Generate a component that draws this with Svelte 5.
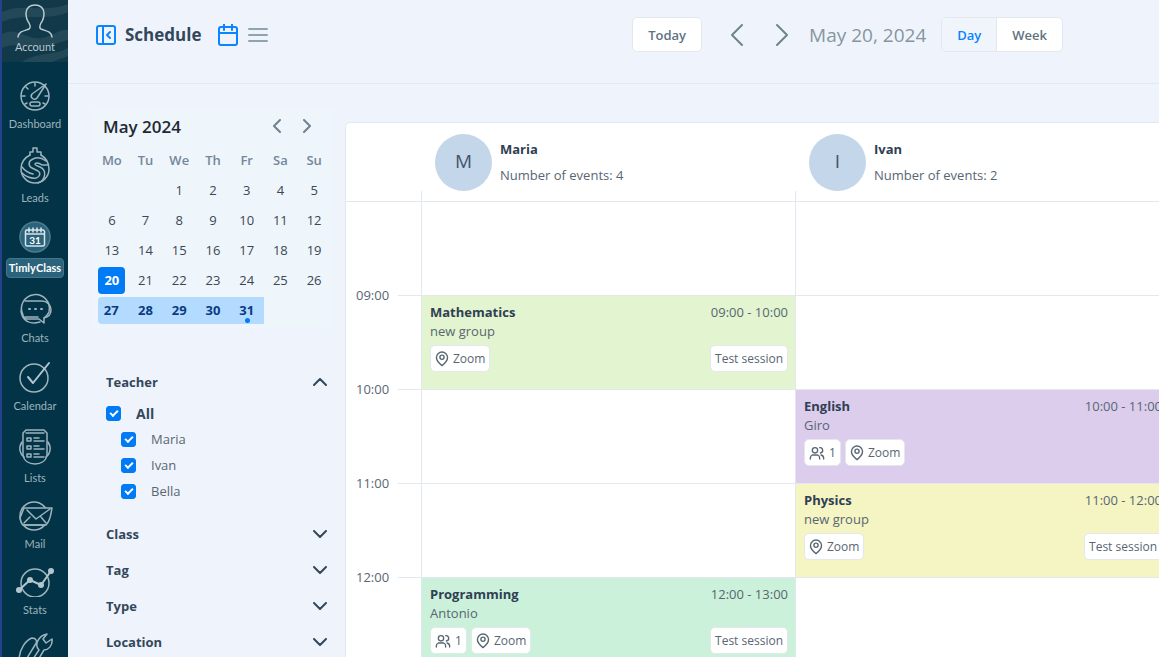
<script lang="ts">
  type Item = { id: string; label: string; height: number };
  type Lesson = {
    title: string;
    group: string;
    time: string;
    color: string;
    members?: number;
    tag?: string;
  };
  type Teacher = { name: string; events: number; slots: (Lesson | null)[] };

  const items: Item[] = [
    { id: 'dashboard', label: 'Dashboard', height: 30 },
    { id: 'leads', label: 'Leads', height: 38 },
    { id: 'class', label: 'TimlyClass', height: 32 },
    { id: 'chats', label: 'Chats', height: 32 },
    { id: 'calendar', label: 'Calendar', height: 32 },
    { id: 'lists', label: 'Lists', height: 36 },
    { id: 'mail', label: 'Mail', height: 30 },
    { id: 'stats', label: 'Stats', height: 30 },
    { id: 'settings', label: 'Settings', height: 36 }
  ];

  const weekdays = ['Mo', 'Tu', 'We', 'Th', 'Fr', 'Sa', 'Su'];

  // May 2024 starts on Wednesday
  const weeks: number[][] = [0, 1, 2, 3, 4].map((w) =>
    weekdays.map((_, d) => {
      const day = w * 7 + d - 1;
      return day > 0 && day <= 31 ? day : 0;
    })
  );

  const hours = ['09:00', '10:00', '11:00', '12:00'];

  const teachers: Teacher[] = [
    {
      name: 'Maria',
      events: 4,
      slots: [
        null,
        { title: 'Mathematics', group: 'new group', time: '09:00 - 10:00', color: 'green', tag: 'Test session' },
        null,
        null,
        { title: 'Programming', group: 'Antonio', time: '12:00 - 13:00', color: 'mint', members: 1, tag: 'Test session' }
      ]
    },
    {
      name: 'Ivan',
      events: 2,
      slots: [
        null,
        null,
        { title: 'English', group: 'Giro', time: '10:00 - 11:00', color: 'purple', members: 1 },
        { title: 'Physics', group: 'new group', time: '11:00 - 12:00', color: 'yellow', tag: 'Test session' },
        null
      ]
    }
  ];

  const filters = ['Class', 'Tag', 'Type', 'Location'];

  let view = $state('Day');
  let selected = $state(20);
  let teacherOpen = $state(true);
  let checked: Record<string, boolean> = $state({ Maria: true, Ivan: true, Bella: true });
  let allChecked = $derived(Object.values(checked).every(Boolean));

  function toggleAll() {
    const next = !allChecked;
    for (const name in checked) checked[name] = next;
  }
</script>

<div class="app">
  <nav class="sidebar">
    <a class="account" href="#account">
      <svg class="waves" viewBox="0 0 66 62" preserveAspectRatio="none" aria-hidden="true">
        <path d="M0 12C20 2 40 14 66 4V12C44 22 22 12 0 22Z M0 34C16 26 22 40 40 38C52 36 58 28 66 30V40C50 44 40 50 20 46C10 44 4 46 0 48Z M20 62C34 52 52 56 66 48V56L50 62Z" />
      </svg>
      <svg width="36" height="34" viewBox="0 0 36 34" class="line">
        <path d="M1 33C2 27 7 27 12 25C14 24 13 21 12 19C9 15 9 12 9 9C9 4 13 1 18 1S27 4 27 9C27 12 27 15 24 19C23 21 22 24 24 25C29 27 34 27 35 33" />
      </svg>
      <span>Account</span>
    </a>
    {#each items as item}
      <a class="item" class:active={item.id === 'class'} href="#{item.id}">
        <svg class="line" width="40" height={item.height} viewBox="0 0 40 {item.height}">
          {#if item.id === 'dashboard'}
            <circle cx="20" cy="15" r="14" />
            <path d="M31 3L22 17A3 3 0 0 1 17 13Z M17 21h6a1.500 1.500 0 0 1 0 4h-6a1.500 1.500 0 0 1 0-4Z" />
            <path d="M20 2v3M7 15h3M30 15h3M11 6l2 2M10 23l2-1M30 23l-2-1" />
          {:else if item.id === 'leads'}
            <path d="M15 8V5h3V1h4v4h4v3" />
            <path d="M15 8C9 11 6 16 6 22A14 14 0 0 0 34 22C34 16 31 11 26 8" />
            <path d="M31 14C27 11 22 10 18 12C13 14 13 19 17 21L23 24C26 26 25 30 21 31C16 32 10 29 7 26" />
            <path d="M33 18H27C23 15 20 16 20 17C20 18 22 19 25 20C32 23 31 33 23 36M7 20C10 24 14 26 18 27" />
          {:else if item.id === 'class'}
            <circle class="disc" cx="20" cy="16" r="15" />
            <path d="M12 9h16a1.500 1.500 0 0 1 1.500 1.500v13A1.500 1.500 0 0 1 28 25H12a1.500 1.500 0 0 1-1.500-1.500v-13A1.500 1.500 0 0 1 12 9Z" />
            <path d="M11 13h18M14 7v4M18 7v4M22 7v4M26 7v4" />
            <text x="20" y="23">31</text>
          {:else if item.id === 'chats'}
            <path d="M8 22A14 14 0 1 1 34 19C33 22 30 24 29 25V30L24 26H11C9 25 8 24 8 22" />
            <path d="M10 8H27C32 8 36 12 36 17C36 21 33 24 29 25M6 18C7 26 12 30 20 30L25 29M10 24h13" />
            <path class="dots" d="M14 16h1M20 16h1M26 16h1" />
          {:else if item.id === 'calendar'}
            <circle cx="19" cy="17" r="14" />
            <path class="thick" d="M13 16L18 22L34 2" />
          {:else if item.id === 'lists'}
            <path d="M11 1h18l3 3v22C31 32 26 35 20 35S9 32 8 26V4Z M11 4h18" />
            <path d="M7 13C3 19 5 25 9 28M33 13C37 19 35 25 31 28" />
            <path d="M12 9h4v3h-4ZM12 17h4v3h-4ZM12 25h4v3h-4ZM19 9h5M19 12h10M19 17h5M19 20h10M19 25h5M19 28h10" />
          {:else if item.id === 'mail'}
            <circle cx="19" cy="15" r="14" />
            <path class="fill" d="M9 7H37C36 11 36 19 31 24H9C6 24 6 20 5 17Z" />
            <path d="M12 9L21 18L35 8M9 22L15 16M31 22L26 16M8 24h22" />
          {:else if item.id === 'stats'}
            <circle cx="20" cy="16" r="14" />
            <path class="thick" d="M4 23L15 13L26 18L36 4" />
            <circle class="dot" cx="4" cy="23" r="3" />
            <circle class="dot" cx="15" cy="13" r="3" />
            <circle class="dot" cx="26" cy="18" r="3" />
            <circle class="dot" cx="36" cy="4" r="3" />
          {:else}
            <path d="M4 26C5 15 11 7 17 5C21 5 23 8 20 12L9 30" />
            <path d="M14 32L24 17C19 12 23 3 32 1L28 6L31 10L37 6C38 13 33 17 29 17L20 32" />
          {/if}
        </svg>
        <span>{item.label}</span>
      </a>
    {/each}
  </nav>

  <main>
    <header class="topbar">
      <div class="group">
        <button class="icon blue" aria-label="Collapse panel">
          <svg width="20" height="20" viewBox="0 0 20 20">
            <rect x="1" y="1" width="18" height="18" rx="2" />
            <path d="M7 1v18M14 7l-3 3l3 3" />
          </svg>
        </button>
        <h1>Schedule</h1>
        <button class="icon blue calendar-view" aria-label="Calendar view">
          <svg width="20" height="22" viewBox="0 0 20 22">
            <rect x="1" y="3" width="18" height="18" rx="2" />
            <path d="M1 9h18M6 0v6M14 0v6" />
          </svg>
        </button>
        <button class="icon gray" aria-label="List view">
          <svg width="20" height="20" viewBox="0 0 20 20">
            <path d="M1 4h18M1 10h18M1 16h18" />
          </svg>
        </button>
      </div>
      <div class="group">
        <button class="today">Today</button>
        <button class="icon slate prev" aria-label="Previous day">
          <svg width="14" height="24" viewBox="0 0 14 24"><path d="M12 2L2 12l10 10" /></svg>
        </button>
        <button class="icon slate next" aria-label="Next day">
          <svg width="14" height="24" viewBox="0 0 14 24"><path d="M2 2l10 10L2 22" /></svg>
        </button>
        <span class="date">May 20, 2024</span>
        <div class="switch">
          {#each ['Day', 'Week'] as name}
            <button class:on={view === name} onclick={() => (view = name)}>{name}</button>
          {/each}
        </div>
      </div>
    </header>

    <div class="content">
      <aside>
        <section class="month">
          <div class="month-head">
            <h2>May 2024</h2>
            <button class="icon slate" aria-label="Previous month">
              <svg width="10" height="14" viewBox="0 0 10 14"><path d="M8 1L2 7l6 6" /></svg>
            </button>
            <button class="icon slate" aria-label="Next month">
              <svg width="10" height="14" viewBox="0 0 10 14"><path d="M2 1l6 6l-6 6" /></svg>
            </button>
          </div>
          <table>
            <thead>
              <tr>
                {#each weekdays as day}<th>{day}</th>{/each}
              </tr>
            </thead>
            <tbody>
              {#each weeks as week}
                <tr>
                  {#each week as day}
                    <td class:range={day >= 27} class:first={day === 27}>
                      {#if day}
                        <button
                          class:selected={day === selected}
                          class:marked={day === 31}
                          onclick={() => (selected = day)}>{day}</button>
                      {/if}
                    </td>
                  {/each}
                </tr>
              {/each}
            </tbody>
          </table>
        </section>

        <section class="filters">
          <button class="filter" onclick={() => (teacherOpen = !teacherOpen)}>
            Teacher
            <svg width="14" height="8" viewBox="0 0 14 8"><path d="M1 7l6-6l6 6" /></svg>
          </button>
          {#if teacherOpen}
            <div class="options">
              <label class="all">
                <input type="checkbox" checked={allChecked} onchange={toggleAll} />
                All
              </label>
              {#each Object.keys(checked) as name}
                <label class="option">
                  <input type="checkbox" bind:checked={checked[name]} />
                  {name}
                </label>
              {/each}
            </div>
          {/if}
          {#each filters as filter}
            <button class="filter">
              {filter}
              <svg width="14" height="8" viewBox="0 0 14 8"><path d="M1 1l6 6l6-6" /></svg>
            </button>
          {/each}
        </section>
      </aside>

      <div class="board">
        <div class="corner"></div>
        {#each teachers as teacher}
          <div class="teacher">
            <div class="avatar">{teacher.name[0]}</div>
            <div>
              <h3>{teacher.name}</h3>
              <p>Number of events: {teacher.events}</p>
            </div>
          </div>
        {/each}

        <div class="hours">
          {#each hours as hour}
            <div class="hour">{hour}</div>
          {/each}
        </div>
        {#each teachers as teacher}
          <div class="lane">
            {#each teacher.slots as lesson}
              <div class="slot">
                {#if lesson}
                  <article class="lesson {lesson.color}">
                    <div class="row">
                      <h4>{lesson.title}</h4>
                      <span>{lesson.time}</span>
                    </div>
                    <p>{lesson.group}</p>
                    <div class="chips">
                      {#if lesson.members}
                        <span class="chip">
                          <svg width="16" height="16" viewBox="0 0 24 24">
                            <circle cx="9" cy="8" r="4" />
                            <path d="M2 21v-1a5 5 0 0 1 3-5M16 21v-1a5 5 0 0 0-3-5M5 15h8M2 21v-2M16 4a4 4 0 0 1 1 8M18 15a5 5 0 0 1 4 5v1" />
                          </svg>
                          {lesson.members}
                        </span>
                      {/if}
                      <span class="chip">
                        <svg width="14" height="16" viewBox="0 0 20 23">
                          <path d="M18 9.500C18 15 10 21 10 21S2 15 2 9.500a8 8 0 0 1 16 0Z" />
                          <circle cx="10" cy="9" r="3" />
                        </svg>
                        Zoom
                      </span>
                      {#if lesson.tag}
                        <span class="chip tag">{lesson.tag}</span>
                      {/if}
                    </div>
                  </article>
                {/if}
              </div>
            {/each}
          </div>
        {/each}
      </div>
    </div>
  </main>
</div>

<style>
  :global(body) {
    background: #eff4fc;
  }

  .app {
    display: flex;
    height: 100vh;
    overflow: hidden;
    font-family: 'Open Sans', 'Noto Sans', sans-serif;
    font-size: 13px;
    color: #586673;
  }

  h1, h2, h3, h4, p {
    margin: 0;
  }

  button {
    font: inherit;
    color: inherit;
    border: none;
    background: none;
    padding: 0;
    cursor: pointer;
  }

  svg {
    display: block;
    flex: none;
    fill: none;
    stroke: currentColor;
    stroke-width: 2;
    stroke-linecap: round;
    stroke-linejoin: round;
  }

  /* Sidebar */
  .sidebar {
    flex: none;
    box-sizing: border-box;
    width: 68px;
    display: flex;
    flex-direction: column;
    gap: 15px;
    background: #033347;
    border-left: 2px solid #27408a;
    overflow: hidden;
  }

  .sidebar a {
    flex: none;
    display: flex;
    flex-direction: column;
    align-items: center;
    gap: 5px;
    color: #9db4bd;
    font-family: Lato, 'Open Sans', sans-serif;
    font-size: 11px;
    line-height: 16px;
    text-decoration: none;
  }

  .sidebar .account {
    position: relative;
    height: 58px;
    padding-top: 4px;
    gap: 1px;
    margin-bottom: 4px;
    background: #12394a;
    color: #b9c9cf;
  }

  .sidebar .waves {
    position: absolute;
    inset: 0;
    width: 100%;
    height: 100%;
    fill: #234857;
    stroke: none;
  }

  .account span,
  .account .line {
    position: relative;
  }

  .line {
    stroke-width: 1.5;
  }

  .line .thick {
    stroke: #b4c6cd;
    stroke-width: 2;
  }

  .line .dots {
    stroke-width: 2;
  }

  .line .dot {
    fill: #b4c6cd;
    stroke: none;
  }

  .line .fill {
    fill: #033347;
  }

  .line .disc {
    fill: #2a637b;
    stroke: #4c7c90;
  }

  .line text {
    fill: #ffffff;
    stroke: none;
    font-size: 10px;
    font-weight: 700;
    text-anchor: middle;
  }

  .sidebar .active {
    color: #dce6ea;
  }

  .active span {
    box-sizing: border-box;
    width: 58px;
    height: 20px;
    line-height: 18px;
    border: 1px solid #44768b;
    border-radius: 4px;
    background: #2a637b;
    color: #ffffff;
    font-weight: 700;
    text-align: center;
  }

  /* Top bar */
  main {
    flex: 1;
    min-width: 0;
    display: flex;
    flex-direction: column;
  }

  .topbar {
    display: flex;
    align-items: center;
    justify-content: space-between;
    padding: 17px 96px 31px 28px;
    border-bottom: 1px solid #e3e9f2;
  }

  .group {
    display: flex;
    align-items: center;
  }

  .blue {
    color: #0a84ff;
  }

  .gray {
    color: #8fa3b0;
  }

  .slate {
    color: #71828f;
  }

  h1 {
    margin: 0 17px 0 9px;
    font-size: 17px;
    line-height: 24px;
    font-weight: 700;
    color: #33475b;
  }

  .calendar-view {
    margin-right: 10px;
  }

  .today {
    box-sizing: border-box;
    width: 70px;
    height: 35px;
    border: 1px solid #e3e8ee;
    border-radius: 5px;
    background: #ffffff;
    font-weight: 600;
    color: #61727f;
  }

  .prev {
    margin-left: 28px;
  }

  .next {
    margin: 0 20px 0 31px;
  }

  .date {
    font-size: 19px;
    line-height: 24px;
    color: #87959f;
  }

  .switch {
    display: flex;
    height: 33px;
    margin-left: 15px;
    border: 1px solid #e3e8ee;
    border-radius: 5px;
    background: #ffffff;
    overflow: hidden;
  }

  .switch button {
    padding: 0 15px;
    font-weight: 600;
    color: #61727f;
  }

  .switch .on {
    background: #eff5fa;
    border-right: 1px solid #e3e8ee;
    color: #0a84ff;
  }

  /* Left column */
  .content {
    flex: 1;
    min-height: 0;
    display: flex;
    align-items: flex-start;
  }

  aside {
    flex: none;
    box-sizing: border-box;
    width: 277px;
    padding: 25px 11px 0 24px;
  }

  .month {
    padding: 3px;
    background: #eef5fb;
  }

  .month-head {
    display: flex;
    align-items: center;
    gap: 20px;
    height: 28px;
    padding: 0 19px 5px 8px;
  }

  h2 {
    margin-right: auto;
    font-size: 17px;
    font-weight: 600;
    color: #1f2933;
  }

  table {
    width: 100%;
    table-layout: fixed;
    border-collapse: collapse;
  }

  th,
  td {
    height: 30px;
    padding: 0;
    text-align: center;
  }

  th {
    font-weight: 600;
    color: #74879a;
  }

  td button {
    display: block;
    width: 27px;
    height: 27px;
    margin: 0 auto;
    border-radius: 4px;
    font-weight: 500;
    color: #3b4753;
  }

  td .selected {
    background: #007bf5;
    color: #ffffff;
    font-weight: 700;
  }

  .range button {
    width: 100%;
    border-radius: 0;
    background: #b3dbff;
    color: #0b3a82;
    font-weight: 700;
  }

  .first button {
    width: 31px;
    margin-right: 0;
    padding-right: 4px;
    border-radius: 4px 0 0 4px;
  }

  .marked {
    position: relative;
  }

  .marked::after {
    content: '';
    position: absolute;
    left: 50%;
    bottom: 1px;
    width: 5px;
    height: 5px;
    margin-left: -2px;
    border-radius: 50%;
    background: #007bf5;
  }

  .filters {
    padding: 36px 7px 0 14px;
  }

  .filter {
    display: flex;
    align-items: center;
    justify-content: space-between;
    width: 100%;
    height: 36px;
    font-weight: 700;
    color: #33475b;
  }

  .options {
    padding-bottom: 12px;
  }

  label {
    display: flex;
    align-items: center;
    gap: 15px;
    height: 26px;
  }

  .all {
    font-size: 14px;
    font-weight: 700;
    color: #33475b;
  }

  .option {
    padding-left: 15px;
  }

  input {
    appearance: none;
    display: grid;
    place-items: center;
    width: 15px;
    height: 15px;
    margin: 0;
    border: 1px solid #007bf5;
    border-radius: 3px;
  }

  input:checked {
    background: #007bf5;
  }

  input:checked::after {
    content: '';
    width: 6px;
    height: 3px;
    margin-bottom: 2px;
    border: solid #ffffff;
    border-width: 0 0 2px 2px;
    transform: rotate(-45deg);
  }

  /* Schedule board */
  .board {
    flex: 1;
    display: grid;
    grid-template-columns: 75px repeat(2, minmax(374px, 1fr));
    margin-top: 38px;
    border: solid #e3e8f0;
    border-width: 1px 0 0 1px;
    border-radius: 5px 0 0 0;
    background: #ffffff;
    min-width: 0;
  }

  .corner,
  .teacher {
    height: 78px;
    border-bottom: 1px solid #e3e8f0;
  }

  .teacher {
    position: relative;
    display: flex;
    align-items: center;
    gap: 8px;
    padding-left: 14px;
  }

  .teacher::before {
    content: '';
    position: absolute;
    left: 0;
    bottom: 0;
    width: 1px;
    height: 10px;
    background: #e3e8f0;
  }

  .avatar {
    width: 57px;
    height: 57px;
    border-radius: 50%;
    background: #c4d6ea;
    color: #45536a;
    font-size: 19px;
    line-height: 55px;
    text-align: center;
  }

  h3 {
    margin-bottom: 7px;
    font-size: 13px;
    line-height: 19px;
    color: #2f4052;
  }

  .teacher p {
    line-height: 19px;
  }

  .hours {
    padding-top: 46px;
  }

  .hour {
    display: flex;
    align-items: center;
    gap: 9px;
    height: 94px;
    padding-left: 10px;
  }

  .hour::after {
    content: '';
    flex: 1;
    height: 1px;
    background: #e3e8f0;
  }

  .lane {
    border-left: 1px solid #e3e8f0;
  }

  .slot {
    box-sizing: border-box;
    height: 94px;
    border-bottom: 1px solid #e3e8f0;
  }

  .lesson {
    box-sizing: border-box;
    height: 100%;
    padding: 7px 7px 7px 8px;
    line-height: 19px;
  }

  .green { background: #e3f4d0; }
  .mint { background: #cbf1da; }
  .purple { background: #dccdec; }
  .yellow { background: #f5f5c3; }

  .row {
    display: flex;
    justify-content: space-between;
  }

  h4 {
    font-size: 13px;
    color: #2f4052;
  }

  .chips {
    display: flex;
    gap: 4px;
    margin-top: 4px;
  }

  .chip {
    box-sizing: border-box;
    display: flex;
    align-items: center;
    gap: 4px;
    height: 27px;
    padding: 0 4px;
    border: 1px solid #e3e8ee;
    border-radius: 5px;
    background: #ffffff;
    font-size: 12px;
  }

  .tag {
    margin-left: auto;
  }
</style>
